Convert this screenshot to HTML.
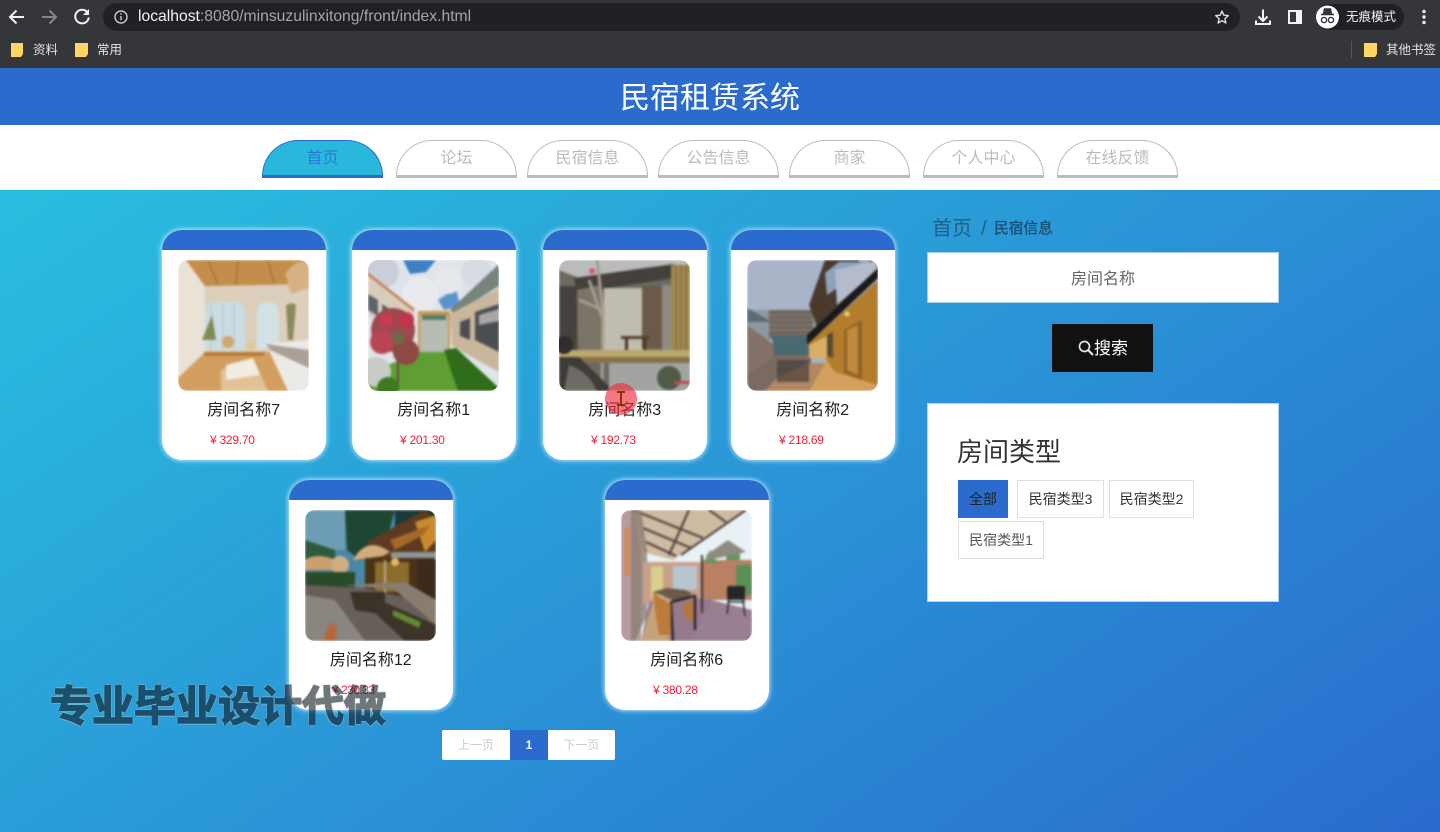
<!DOCTYPE html>
<html lang="zh-CN">
<head>
<meta charset="utf-8">
<title>民宿租赁系统</title>
<style>
*{box-sizing:border-box;margin:0;padding:0}
html,body{width:1440px;height:832px;overflow:hidden;background:#2a90d6}
body{position:relative;font-family:"Liberation Sans","Noto Sans CJK SC",sans-serif;color:#333}
.a{position:absolute}
#chrome{left:0;top:0;width:1440px;height:68px;background:#35363a}
#url{left:103px;top:3px;width:1137px;height:28px;border-radius:14px;background:#202124}
.urltxt{left:138px;top:8px;font-size:15.7px;line-height:18px;color:#a4a6aa;white-space:nowrap}
.urltxt b{font-weight:400;color:#f1f3f4}
.bm{font-size:12.500px;line-height:16px;color:#e3e4e6;white-space:nowrap}
#hdr{left:0;top:68px;width:1440px;height:57px;background:#2a6bcd;color:#fff;font-size:30px;line-height:57px}
#hdr span{position:absolute;left:620px;top:2px;white-space:nowrap}
#nav{left:0;top:125px;width:1440px;height:65px;background:#fff}
.tab{position:absolute;top:15px;width:121px;height:38px;border:1px solid #bbb;border-bottom:3px solid #bbb;border-radius:36px 36px 0 0;text-align:center;font-size:16px;line-height:33px;padding-top:1px;color:#bbb}
.tab.on{background:#29b8dc;border-color:#2a6bcd;color:#2a7ad0}
#main{left:0;top:190px;width:1440px;height:642px;background:linear-gradient(146deg,#29bfdf 0%,#2a6bcd 100%)}
.card{position:absolute;width:163.500px;height:229.500px;background:#fff;border-radius:20px;box-shadow:0 0 5px 1px rgba(225,245,255,.8);overflow:hidden}
.card i{position:absolute;left:0;top:0;width:100%;height:20px;background:#2a6bcd}
.card .ph{position:absolute;left:16px;top:30px;width:131px;height:131px;border-radius:10px;overflow:hidden}
.ph svg{display:block;width:131px;height:131px}
.ph g.s{filter:blur(1px)}
.card .t{position:absolute;left:0;width:100%;top:169px;text-align:center;font-size:16px;line-height:24px;color:#222}
.card .p{position:absolute;left:48px;top:201px;font-size:12px;line-height:18px;color:#f0213a;white-space:nowrap;letter-spacing:-.25px}
.bc1{left:932px;top:214px;font-size:20px;line-height:30px;color:#1f5f88;white-space:nowrap}
.bc2{left:981px;top:215px;font-size:20px;line-height:28px;color:#1f5f88}
.bc3{left:994px;top:220px;font-size:14.700px;line-height:19px;color:#174e72;white-space:nowrap;-webkit-text-stroke:.3px #174e72}
#inp{left:927px;top:252px;width:352px;height:51px;background:#fff;border:1px solid #a9cfe8;text-align:center;font-size:16px;line-height:49px;padding-top:2px;color:#666}
#btn{left:1052px;top:324px;width:101px;height:48px;background:#111;color:#fff;font-size:17px;line-height:48px;padding:1px 0 0 42px}
#panel{left:927px;top:403px;width:352px;height:199px;background:#fff;border:1px solid #b5d5ea}
.ptitle{left:957px;top:433px;font-size:26px;line-height:38px;color:#333;white-space:nowrap}
.tag{position:absolute;height:38px;border:1px solid #dfdfdf;background:#fff;font-size:14px;line-height:36px;text-align:center;color:#333;white-space:nowrap}
.pg{position:absolute;top:730px;height:30px;background:#fff;font-size:12px;line-height:30px;text-align:center;color:#ccc}
#wm{left:50px;top:677px;font-size:42px;line-height:60px;font-weight:700;white-space:nowrap;color:#101c26;opacity:.6;-webkit-text-stroke:1.600px #101c26;text-shadow:1.300px 0 0 #c8d2d8,-1.300px 0 0 #c8d2d8,0 1.300px 0 #c8d2d8,0 -1.300px 0 #c8d2d8,1px 1px 0 #c8d2d8,-1px 1px 0 #c8d2d8,1px -1px 0 #c8d2d8,-1px -1px 0 #c8d2d8}
</style>
</head>
<body>
<div class="a" id="chrome"></div>
<div class="a" id="url"></div>
<svg class="a" style="left:0;top:0" width="140" height="34" viewBox="0 0 140 34" fill="none">
<path d="M24 17H10M16.500 10.500L10 17l6.500 6.500" stroke="#f1f3f4" stroke-width="2"/>
<path d="M42 17h14M49.500 10.500L56 17l-6.500 6.500" stroke="#85878b" stroke-width="2"/>
<path d="M87.500 12.500A6.800 6.800 0 1 0 88.800 17.500" stroke="#f1f3f4" stroke-width="2"/>
<path d="M89 9v6h-6z" fill="#f1f3f4"/>
<circle cx="121" cy="17" r="6" stroke="#c8cacc" stroke-width="1.400"/>
<path d="M121 16v4.200M121 13.200v1.500" stroke="#c8cacc" stroke-width="1.400"/>
</svg>
<div class="a urltxt"><b>localhost</b>:8080/minsuzulinxitong/front/index.html</div>
<svg class="a" style="left:1205px;top:0" width="235" height="34" viewBox="1205 0 235 34" fill="none">
<path d="M1222 11l1.800 4.200 4.500.4-3.400 3 1 4.400-3.900-2.300-3.900 2.300 1-4.400-3.400-3 4.500-.4z" stroke="#dfe1e3" stroke-width="1.400" stroke-linejoin="round"/>
<path d="M1263 9.500v11M1258.500 16.500l4.500 4.500 4.500-4.500" stroke="#f1f3f4" stroke-width="2"/>
<path d="M1256 20.500v3.500h14v-3.500" stroke="#f1f3f4" stroke-width="2"/>
<rect x="1289" y="11" width="12" height="12" stroke="#f1f3f4" stroke-width="2"/>
<rect x="1296" y="11" width="5" height="12" fill="#f1f3f4"/>
<rect x="1316" y="4" width="88" height="26" rx="13" fill="#202124"/>
<circle cx="1327.500" cy="17" r="11.500" fill="#fff"/>
<path d="M1321 14.500h13M1323.500 14l1-5h6l1 5" stroke="#35363a" stroke-width="1.500" fill="#35363a"/>
<circle cx="1324" cy="20" r="2.600" stroke="#35363a" stroke-width="1.400"/>
<circle cx="1331" cy="20" r="2.600" stroke="#35363a" stroke-width="1.400"/>
<circle cx="1424" cy="11.500" r="1.700" fill="#f1f3f4"/><circle cx="1424" cy="17" r="1.700" fill="#f1f3f4"/><circle cx="1424" cy="22.500" r="1.700" fill="#f1f3f4"/>
</svg>
<div class="a bm" style="left:1346px;top:9px;color:#f1f3f4">无痕模式</div>
<svg class="a" style="left:0;top:36px" width="1440" height="30" viewBox="0 36 1440 30">
<path d="M11 43h12v11l-2 3H11z" fill="#fdd663"/>
<path d="M75 43h13v11l-2 3H75z" fill="#fdd663"/>
<path d="M1364 43h13v11l-2 3h-11z" fill="#fdd663"/>
<rect x="1351" y="41" width="1" height="17" fill="#55565a"/>
</svg>
<div class="a bm" style="left:33px;top:42px">资料</div>
<div class="a bm" style="left:97px;top:42px">常用</div>
<div class="a bm" style="left:1386px;top:42px">其他书签</div>

<div class="a" id="hdr"><span>民宿租赁系统</span></div>
<div class="a" id="nav">
<div class="tab on" style="left:262px">首页</div>
<div class="tab" style="left:396px">论坛</div>
<div class="tab" style="left:527px">民宿信息</div>
<div class="tab" style="left:658px">公告信息</div>
<div class="tab" style="left:789px">商家</div>
<div class="tab" style="left:923px">个人中心</div>
<div class="tab" style="left:1057px">在线反馈</div>
</div>
<div class="a" id="main"></div>

<div class="card" style="left:162px;top:230px"><i></i><div class="ph">
<svg viewBox="0 0 131 131"><g class="s">
<rect width="131" height="131" fill="#dccfbc"/>
<path d="M0 0H8L27 28V95L0 118Z" fill="#e9e2d6"/>
<path d="M8 0H131V24L27 26Z" fill="#c48d4c"/>
<path d="M30 0l10 25M60 0l-2 25M90 0l6 24" stroke="#a87238" stroke-width="1.500"/>
<path d="M107 14Q118 -2 131 2V28L113 34Z" fill="#d7b184"/>
<path d="M27 90V56Q27 42 40 42H56Q67 42 67 56V90Z" fill="#c9dde3"/>
<path d="M79 90V54Q79 42 90 42Q101 42 101 54V86Z" fill="#d3e2e6"/>
<path d="M33 45v45M45 43v47M56 43v47" stroke="#b6c2c2"/>
<path d="M110 80L108 45L114 43L118 45L115 80" fill="#8c8a5c"/>
<path d="M0 118L27 92H92L131 131H0Z" fill="#d39f60"/>
<path d="M26 92h60v4H26z" fill="#b77a38"/>
<path d="M88 84L131 80V131H110Z" fill="#eceae6"/>
<path d="M88 84L131 90V108L92 90Z" fill="#a9a096"/>
<path d="M43 110L75 98L90 131H43Z" fill="#e0c296"/>
<path d="M48 105L75 98L82 115L48 120Z" fill="#f2ece2"/>
<path d="M24 80l10-25 4 25z" fill="#7f8b55"/>
<circle cx="50" cy="82" r="6" fill="#d2a868"/><circle cx="73" cy="86" r="5" fill="#e1c79a"/>
</g></svg></div><div class="t">房间名称7</div><div class="p">¥ 329.70</div></div>

<div class="card" style="left:352px;top:230px"><i></i><div class="ph">
<svg viewBox="0 0 131 131"><g class="s">
<rect width="131" height="131" fill="#dfe3ea"/>
<path d="M35 0H68L58 12L42 14Z" fill="#3f7fc6"/>
<path d="M70 40l18-12 4 18-16 4z" fill="#5d93cc"/>
<circle cx="15" cy="12" r="16" fill="#c9ced8"/><circle cx="52" cy="35" r="18" fill="#e8eaee"/><circle cx="80" cy="20" r="14" fill="#e6e8ec"/><circle cx="108" cy="12" r="15" fill="#d7dbe2"/>
<path d="M0 14L46 50V82L0 55Z" fill="#d8cdbd"/>
<path d="M0 14L46 50" stroke="#c27e4f" stroke-width="2.500"/>
<path d="M0 34l10 6v16L0 50zM14 44l14 9v16l-14-7z" fill="#5b646a"/>
<path d="M82 50L131 4V26L86 54Z" fill="#76847c"/>
<path d="M82 54L131 28V112L84 86Z" fill="#c8b79d"/>
<path d="M107 52L131 44V92L107 80ZM92 62l10-4v22l-10-4z" fill="#4c4f52"/>
<path d="M111 55l20-6v12l-20 4z" fill="#a9a7a4"/>
<path d="M50 55H82V92H50Z" fill="#b8bcb2"/>
<path d="M50 51H82V56H50ZM50 52h2V92h-2zM80 52h2V92h-2z" fill="#c99a4e"/>
<path d="M54 55H78V60H54Z" fill="#55806a"/>
<path d="M52 92h30L131 128V131H0V113Z" fill="#5f9e35"/>
<path d="M76 90L88 88L131 128V131H90Z" fill="#2f6d1b"/>
<circle cx="8" cy="112" r="15" fill="#c9cbc8"/>
<circle cx="25" cy="70" r="22" fill="#9c4a50"/><circle cx="14" cy="82" r="12" fill="#b94552"/><circle cx="38" cy="92" r="13" fill="#8e4a44"/><circle cx="38" cy="60" r="8" fill="#c0354d"/><circle cx="18" cy="60" r="7" fill="#c93a50"/><circle cx="30" cy="78" r="6" fill="#6d6a48"/>
<path d="M30 100l0 31" stroke="#665040" stroke-width="2"/>
<circle cx="20" cy="128" r="11" fill="#3d7a22"/>
</g></svg></div><div class="t">房间名称1</div><div class="p">¥ 201.30</div></div>

<div class="card" style="left:543px;top:230px"><i></i><div class="ph">
<svg viewBox="0 0 131 131"><g class="s">
<rect width="131" height="131" fill="#6c6962"/>
<path d="M0 0H131V6L20 18L0 10Z" fill="#b9bcbb"/>
<path d="M15 18L115 4L115 18L18 33Z" fill="#44413c"/>
<rect x="0" y="26" width="18" height="72" fill="#45423d"/>
<rect x="45" y="28" width="40" height="64" fill="#c0bcaf"/>
<rect x="83" y="26" width="20" height="62" fill="#6a5a48"/>
<rect x="103" y="25" width="10" height="65" fill="#8f8b84"/>
<rect x="112" y="5" width="19" height="87" fill="#a08850"/>
<path d="M117 5v87M122 5v87M127 5v87" stroke="#7a6538"/>
<rect x="62" y="76" width="28" height="3" fill="#5b3f2b"/><rect x="66" y="78" width="3" height="12" fill="#4a3324"/><rect x="84" y="78" width="3" height="12" fill="#4a3324"/>
<path d="M18 30L40 25L45 90H20Z" fill="#7c7567"/>
<path d="M38 0L44 50L43 131M44 50L20 40M44 60L30 20" stroke="#a59d90" stroke-width="3" fill="none"/>
<circle cx="33" cy="11" r="3" fill="#d65576"/>
<rect x="0" y="90" width="131" height="7" fill="#bda86d"/>
<rect x="20" y="97" width="111" height="6" fill="#86724a"/>
<path d="M0 97H20L55 131H0Z" fill="#3d3c38"/>
<path d="M50 103H131V131H50Z" fill="#a2a4a2"/>
<path d="M10 105Q30 112 38 131H5Z" fill="#6d6b64"/>
<circle cx="110" cy="118" r="12" fill="#4f5b48"/>
<circle cx="5" cy="85" r="9" fill="#2f2e2b"/>
<rect x="115" y="121" width="16" height="3" fill="#c04a50"/>
</g></svg></div><div class="t">房间名称3</div><div class="p">¥ 192.73</div></div>

<div class="card" style="left:731px;top:230px"><i></i><div class="ph">
<svg viewBox="0 0 131 131"><g class="s">
<rect width="131" height="131" fill="#a9b4c8"/>
<rect y="50" width="70" height="30" fill="#8d98a3"/>
<path d="M0 48L25 62H0Z" fill="#5b6b70"/>
<path d="M0 65L28 85V110L0 131Z" fill="#85706a"/>
<rect x="22" y="50" width="44" height="28" fill="#70655f"/>
<path d="M22 55h44M22 60h44M22 65h44M22 70h44" stroke="#8c827a"/>
<path d="M25 76H62V100H28Z" fill="#496a70"/>
<path d="M64 131H0V115L30 95H64Z" fill="#7a6a64"/>
<path d="M30 118L60 103H85L131 131H18Z" fill="#b28762"/>
<path d="M30 100H62V122H30Z" fill="#413a36" opacity=".65"/>
<path d="M62 131L80 100H131V131Z" fill="#d4a05e"/>
<path d="M62 45L78 0H131V15L72 72Z" fill="#4a3a2e"/>
<path d="M78 13L92 2H112V0H122V6L80 35Z" fill="#8ea2bd"/>
<path d="M88 10L130 0V10L90 45Z" fill="#b2bccd"/>
<path d="M60 85L131 20V125L88 112L78 98Z" fill="#b37d2c"/>
<path d="M60 85L131 18V8L60 75Z" fill="#1b1a1a"/>
<path d="M97 70L115 60V120L97 113Z" fill="#8f642b"/>
<path d="M100 70L111 65V115L100 110Z" fill="#c28a3a"/>
<path d="M80 75L86 72V98L80 96Z" fill="#5a4a33"/>
<path d="M62 85L80 76V98H62Z" fill="#d9b063"/>
<circle cx="100" cy="54" r="2.500" fill="#f3d27c"/>
</g></svg></div><div class="t">房间名称2</div><div class="p">¥ 218.69</div></div>

<div class="card" style="left:289px;top:480px"><i></i><div class="ph">
<svg viewBox="0 0 131 131"><g class="s">
<rect width="131" height="131" fill="#4a86a6"/>
<path d="M0 0H40V40H0Z" fill="#6d9db5"/>
<path d="M0 30L30 40V55H0Z" fill="#2d5c3c"/>
<path d="M40 0H90L80 35L55 50L42 40Z" fill="#1e4632"/>
<path d="M90 0H131V30L90 20Z" fill="#1b3a3b"/>
<path d="M62 32L120 0L131 10V60L70 60Z" fill="#5d3a20"/>
<path d="M110 12L131 5V30L120 42Z" fill="#c98a2f"/>
<path d="M85 30L125 15L118 25L90 40Z" fill="#a4692a"/>
<path d="M48 50Q62 25 85 42L78 46L50 50Z" fill="#d3ac7e"/>
<rect x="86" y="42" width="45" height="8" fill="#8e9699"/>
<rect x="60" y="48" width="70" height="45" fill="#4a3318"/>
<rect x="70" y="52" width="34" height="30" fill="#8a6c2c"/>
<rect x="112" y="50" width="19" height="40" fill="#3d2a1c"/>
<circle cx="90" cy="52" r="4" fill="#e3b75d"/>
<rect x="79" y="50" width="2" height="36" fill="#bba98a"/>
<path d="M0 50Q15 40 40 55L30 60H0Z" fill="#caa070"/>
<circle cx="35" cy="55" r="9" fill="#cfae84"/>
<rect x="0" y="62" width="50" height="25" fill="#2a4a28"/>
<path d="M0 75L60 78L131 95V131H0Z" fill="#675f5a"/>
<path d="M0 85L30 90L60 131H0Z" fill="#8a857f"/>
<path d="M40 75L90 80L131 115V90L100 72Z" fill="#887d6f"/>
<path d="M45 82H80V105L50 100Z" fill="#3a3226"/>
<path d="M70 88L131 115V131H100L72 105Z" fill="#3d3429"/>
<path d="M88 100l28 12-2 6-26-12z" fill="#5f8c33"/>
<path d="M18 131L25 112L32 118L30 131Z" fill="#b9663a"/>
</g></svg></div><div class="t">房间名称12</div><div class="p" style="left:43px;letter-spacing:-.5px">¥ 230.33</div></div>

<div class="card" style="left:605px;top:480px"><i></i><div class="ph">
<svg viewBox="0 0 131 131"><g class="s">
<rect width="131" height="131" fill="#e8f2f6"/>
<path d="M12 0H125L82 28L52 50L22 42Z" fill="#cdbba2"/>
<g stroke="#54443d" stroke-width="2.200" fill="none"><path d="M12 0L82 28M22 18L70 38M25 32L55 46M68 0L48 45M125 0L60 45M88 0L105 12"/></g>
<path d="M0 0H12L20 40V131H0Z" fill="#b99aa0"/>
<path d="M3 20l6-5v50l-6 2z" fill="#cf8d5c"/>
<path d="M20 0L26 40V105L14 131H10V0Z" fill="#8b7d72" opacity=".8"/>
<rect x="22" y="52" width="60" height="42" fill="#c9a18a"/>
<rect x="30" y="56" width="12" height="32" fill="#d8cf8c"/>
<rect x="52" y="56" width="24" height="24" fill="#b6c5d0"/>
<rect x="82" y="50" width="49" height="40" fill="#b98064"/>
<path d="M83 52l6-12 8 14zM105 40h14v10h-14z" fill="#5e9a5a"/>
<rect x="115" y="55" width="16" height="30" fill="#5a9056"/>
<path d="M85 45L107 30L125 42L88 50Z" fill="#8e8a80"/>
<path d="M20 131L28 92L82 88L131 100V131Z" fill="#97798e"/>
<path d="M90 92L131 100V131H70Z" fill="#9a7f92"/>
<path d="M20 131L32 92L52 90L48 131Z" fill="#c5a37a"/>
<path d="M32 82l25 10 15-8 -8 -4 -18 -2z" fill="#6b5a47"/>
<path d="M50 92L74 86L74 120M50 92L52 131" stroke="#221e20" stroke-width="2.200" fill="none"/>
<path d="M32 82L50 95L50 125L38 125L34 100Z" fill="#bd7a3b"/>
<path d="M62 95L72 90L72 112L64 108Z" fill="#b77539"/>
<path d="M81 45V103" stroke="#3a3233" stroke-width="2"/>
<rect x="106" y="76" width="18" height="14" rx="2" fill="#262529"/>
<path d="M108 90l-2 14M122 90l2 16M106 92h18" stroke="#2b2a2d" stroke-width="1.500"/>
</g></svg></div><div class="t">房间名称6</div><div class="p">¥ 380.28</div></div>

<svg class="a" style="left:604px;top:382px" width="34" height="34" viewBox="0 0 34 34">
<circle cx="17" cy="17" r="16" fill="#f0303c" fill-opacity=".65"/>
<path d="M13 10h8M17 10v13M13 23h8" stroke="#8a3408" stroke-width="2" fill="none"/>
</svg>

<div class="a bc1">首页</div>
<div class="a bc2">/</div>
<div class="a bc3">民宿信息</div>
<div class="a" id="inp">房间名称</div>
<div class="a" id="btn">搜索</div>
<svg class="a" style="left:1077px;top:339px" width="18" height="18" viewBox="0 0 18 18" fill="none">
<circle cx="7.500" cy="7.500" r="5" stroke="#e2e2e2" stroke-width="1.700"/>
<path d="M11.500 11.500L16 16" stroke="#e2e2e2" stroke-width="2.200"/>
</svg>

<div class="a" id="panel"></div>
<div class="a ptitle">房间类型</div>
<div class="tag" style="left:958px;top:480px;width:50px;background:#2a6bcd;border-color:#2a6bcd;color:#222">全部</div>
<div class="tag" style="left:1017px;top:480px;width:87px">民宿类型3</div>
<div class="tag" style="left:1109px;top:480px;width:85px">民宿类型2</div>
<div class="tag" style="left:958px;top:521px;width:86px;color:#555">民宿类型1</div>

<div class="pg" style="left:442px;width:68px;border-radius:2px 0 0 2px">上一页</div>
<div class="pg" style="left:510px;width:38px;background:#2a6bcd;color:#fff;font-weight:700">1</div>
<div class="pg" style="left:548px;width:67px;border-radius:0 2px 2px 0">下一页</div>

<div class="a" id="wm">专业毕业设计代做</div>
</body>
</html>
